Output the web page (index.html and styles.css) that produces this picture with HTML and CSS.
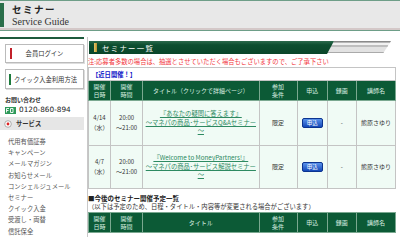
FILE: index.html
```html
<!DOCTYPE html>
<html lang="ja">
<head>
    <meta charset="UTF-8">
    <title>セミナー | Service Guide</title>
    <link rel="stylesheet" href="styles.css">
</head>
<body>
    <header class="top">
        <div class="brand">
            <h1>セミナー</h1>
            <p>Service Guide</p>
        </div>
    </header>

    <div class="wrap">
        <nav class="side">
            <a class="btn btn-red" href="#">会員ログイン</a>
            <a class="btn btn-green" href="#">クイック入金利用方法</a>

            <p class="contact">お問い合わせ</p>
            <p class="tel">
                <svg class="fd" width="11" height="7" viewBox="0 0 11 7">
                    <rect width="11" height="7" fill="#2f9a5a"/>
                    <path d="M1.5 1.5h2.5M1.5 1.5v4M1.5 3.5h2M5.5 1.5h2.5v4h-2.5z" stroke="#fff" stroke-width="0.9" fill="none"/>
                </svg>
                0120-860-894
            </p>

            <div class="svc">
                <svg width="8" height="8" viewBox="0 0 8 8">
                    <circle cx="4" cy="4" r="3.3" fill="#fff" stroke="#999" stroke-width="0.8"/>
                    <circle cx="4" cy="4" r="1.4" fill="#d22"/>
                </svg>
                サービス
            </div>
            <ul class="menu">
                <li>代用有価証券</li>
                <li>キャンペーン</li>
                <li>メールマガジン</li>
                <li>お知らせメール</li>
                <li>コンシェルジュメール</li>
                <li>セミナー</li>
                <li>クイック入金</li>
                <li>受渡し・両替</li>
                <li>信託保全</li>
            </ul>
        </nav>

        <main class="main">
            <div class="ttl">
                <h2><span class="mark"></span>セミナー一覧</h2>
                <svg class="ttl-deco" width="64" height="13" viewBox="0 0 64 13">
                    <polygon points="7,0 64,0 57,11 0,11" fill="#e2e2e2"/>
                    <polygon points="7,0 64,0 63,1.5 6,1.5" fill="#8a8a8a"/>
                    <polygon points="5.4,2.5 62.4,2.5 61.8,3.5 4.8,3.5" fill="#fff"/>
                    <polygon points="4.2,4.5 61.2,4.5 60.6,5.5 3.6,5.5" fill="#9a9a9a"/>
                    <polygon points="0,11 57,11 56.5,12 0,12" fill="#aaa"/>
                </svg>
            </div>

            <p class="note">注:応募者多数の場合は、抽選とさせていただく場合もございますので、ご了承下さい</p>

            <table class="sem">
                <colgroup>
                    <col class="c-date"><col class="c-time"><col class="c-title"><col class="c-cond">
                    <col class="c-apply"><col class="c-rec"><col class="c-name">
                </colgroup>
                <tr><th class="cap" colspan="7">【近日開催！】</th></tr>
                <tr class="head">
                    <th>開催<br>日時</th><th>開催<br>時間</th><th>タイトル（クリックで詳細ページ）</th>
                    <th>参加<br>条件</th><th>申込</th><th>録画</th><th>講師名</th>
                </tr>
                <tr class="r1">
                    <td>4/14<br>（水）</td>
                    <td>20:00<br>～21:00</td>
                    <td><a href="#">『あなたの疑問に答えます』<br>～マネパの商品･サービスQ&amp;Aセミナー～</a></td>
                    <td>限定</td>
                    <td><span class="apply">申込</span></td>
                    <td>-</td>
                    <td>熊原さゆり</td>
                </tr>
                <tr class="r2">
                    <td>4/7<br>（水）</td>
                    <td>20:00<br>～21:00</td>
                    <td><a href="#">『Welcome to MoneyPartners!』<br>～マネパの商品･サービス解説セミナー～</a></td>
                    <td>限定</td>
                    <td><span class="apply">申込</span></td>
                    <td>-</td>
                    <td>熊原さゆり</td>
                </tr>
            </table>

            <h3 class="sub">■今後のセミナー開催予定一覧</h3>
            <p class="subnote">（以下は予定のため、日程・タイトル・内容等が変更される場合がございます）</p>

            <table class="sem">
                <colgroup>
                    <col class="c-date"><col class="c-time"><col class="c-title"><col class="c-cond">
                    <col class="c-apply"><col class="c-rec"><col class="c-name">
                </colgroup>
                <tr class="head">
                    <th>開催<br>日時</th><th>開催<br>時間</th><th>タイトル</th>
                    <th>参加<br>条件</th><th>申込</th><th>録画</th><th>講師名</th>
                </tr>
            </table>
        </main>
    </div>
</body>
</html>
```

FILE: styles.css
```css
body {
    margin: 0;
    font-family: "Noto Sans CJK JP", "Noto Sans", sans-serif;
    font-size: 6.3px;
    color: #333;
    background: #fff;
}

/* header */
.top {
    height: 25px;
    padding-top: 2px;
    background: #e8e8e8;
    border-top: 1px solid #6e9e88;
    border-bottom: 2px solid #d4c8c8;
    box-shadow: 0 1px 0 #6e9e88;
}

.brand {
    height: 24px;
    border-left: 4px solid #2a6e4a;
    padding-left: 8px;
}

.brand h1 {
    margin: 0;
    padding-top: 1px;
    font-size: 9.5px;
    line-height: 11px;
    letter-spacing: 1.5px;
    color: #222;
}

.brand p {
    margin: 2px 0 0;
    font-family: "Liberation Serif", serif;
    font-size: 10px;
    line-height: 10px;
    color: #333;
}

.wrap {
    display: flex;
    margin-top: 7px;
}

/* sidebar */
.side {
    width: 84px;
    padding-right: 3px;
    border-right: 1px solid #c8c8c8;
    display: flex;
    flex-direction: column;
}

.side::before {
    content: "";
    display: block;
    height: 2px;
    background: #1d5a3c;
    margin-right: -3px;
    width: 84px;
}

.btn {
    display: flex;
    align-items: center;
    justify-content: center;
    margin: 5px 0 0 5px;
    height: 17px;
    border: 1px solid #bbb;
    box-shadow: 1px 1px 0 #ddd;
    background: #fff;
    color: #333;
    text-decoration: none;
}

.btn + .btn {
    margin-top: 6px;
    height: 18px;
}

.btn::before {
    content: "";
    width: 2px;
    height: 11px;
    margin-right: auto;
    margin-left: 4px;
}

.btn::after {
    content: "";
    margin-left: auto;
    width: 6px;
}

.btn-red::before { background: #c2202a; }
.btn-green::before { background: #1d7a3c; margin-left: 3px; }
.btn-green::after { width: 3px; }

.contact {
    margin: 7px 0 0 5px;
    font-size: 6px;
    font-weight: bold;
    line-height: 8px;
}

.tel {
    margin: 1px 0 0 5px;
    display: flex;
    align-items: center;
    gap: 3px;
    font-family: "DejaVu Sans", sans-serif;
    font-size: 7.3px;
    line-height: 10px;
    color: #222;
}

.svc {
    display: flex;
    align-items: center;
    gap: 4px;
    margin-top: 2px;
    height: 13px;
    padding-left: 4px;
    background: #e6e6e6;
    font-weight: bold;
    font-size: 6.3px;
}

.menu {
    list-style: none;
    margin: 6px 0 0;
    padding: 0 0 0 8px;
    color: #555;
}

.menu li {
    line-height: 11.2px;
}

/* main */
.main {
    flex: 1;
    padding: 4px 4px 0 1px;
}

.ttl {
    display: flex;
    align-items: flex-start;
}

.ttl h2 {
    width: 245px;
    height: 13px;
    margin: 0;
    display: flex;
    align-items: center;
    gap: 5px;
    padding-left: 5px;
    box-sizing: border-box;
    background: linear-gradient(#2c6a4c, #0d4f30 30%, #0a4529);
    clip-path: polygon(0 0, 100% 0, calc(100% - 7px) 100%, 0 100%);
    color: #fff;
    font-size: 7.4px;
    font-weight: normal;
    letter-spacing: 1.3px;
}

.mark {
    width: 3px;
    height: 9px;
    background: linear-gradient(90deg, #e7c86a, #b8902e);
}

.ttl-deco {
    margin-left: -7px;
}

.note {
    margin: 3px 0 0 -1px;
    color: #f2333a;
    line-height: 10px;
    white-space: nowrap;
}

.sem {
    width: 308px;
    margin-left: -1px;
    border-collapse: collapse;
    table-layout: fixed;
    border: 1px solid #c4c4c4;
}

.c-date { width: 22px; }
.c-time { width: 32px; }
.c-title { width: 116px; }
.c-cond { width: 38px; }
.c-apply { width: 30px; }
.c-rec { width: 29px; }
.c-name { width: 39px; }

.sem th, .sem td {
    border: 1px solid #c4c4c4;
    padding: 0;
    text-align: center;
    font-weight: normal;
}

.sem .cap {
    height: 12px;
    text-align: left;
    padding-left: 3px;
    background: #fff;
    color: #1020c8;
    font-weight: bold;
}

.head th {
    height: 19px;
    background: #0c5a36;
    color: #d8eee0;
    font-size: 6px;
    line-height: 7.5px;
    border-color: #7aa890;
}

.sem td {
    background: #f0fbf5;
    color: #333;
    font-size: 6px;
    line-height: 10px;
}

.r1 td { height: 44px; }
.r2 td { height: 42px; }

.sem td a {
    display: block;
    font-size: 6.3px;
    line-height: 8.5px;
    color: #2e8a62;
}

.apply {
    display: inline-block;
    width: 19px;
    height: 8px;
    line-height: 8px;
    border-radius: 2px;
    background: linear-gradient(#5a92ea, #1448b8);
    border: 1px solid #0c3490;
    color: #fff;
    font-size: 5.5px;
    vertical-align: middle;
}

.sub {
    margin: 5px 0 0 -1px;
    font-size: 6.5px;
    line-height: 9px;
    color: #222;
}

.subnote {
    margin: 0 0 1px -1px;
    font-size: 6.3px;
    line-height: 8px;
    color: #333;
    white-space: nowrap;
}
```
